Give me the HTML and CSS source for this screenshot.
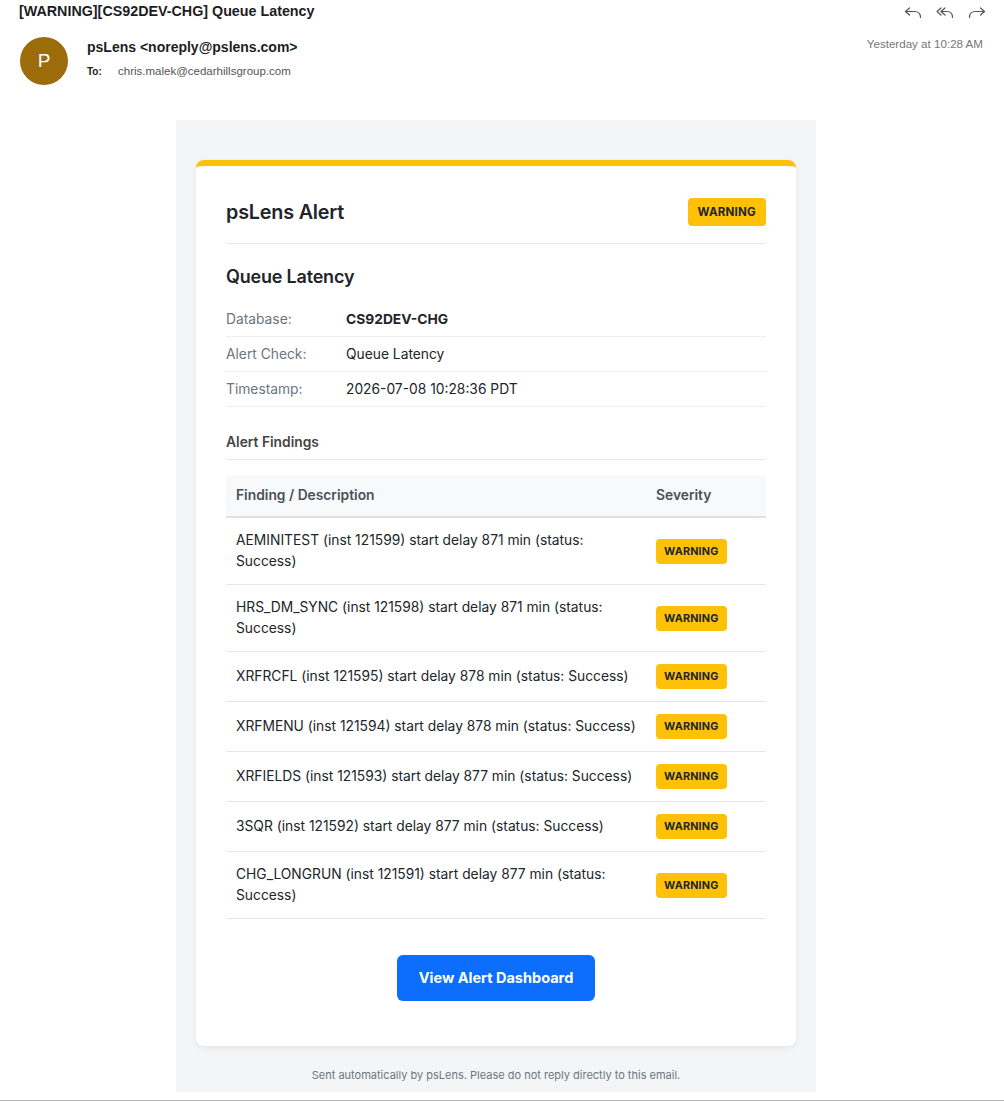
FILE: index.html
```html
<!DOCTYPE html>
<html lang="en">
<head>
    <meta charset="UTF-8">
    <meta name="viewport" content="width=device-width, initial-scale=1.0">
    <title>[WARNING][CS92DEV-CHG] Queue Latency</title>
    <link rel="stylesheet" href="styles.css">
</head>
<body>
<div class="mail-header">
    <div class="subject-row">
        <div class="subject">[WARNING][CS92DEV-CHG] Queue Latency</div>
        <div class="actions">
            <!-- reply -->
            <svg class="icon" viewBox="0 0 18 14" width="18" height="14">
                <path d="M5.5 3 L1.5 6.5 L5.5 10" />
                <path d="M1.5 6.5 H10.5 C14 6.5 16.5 8.5 16.5 12.5" />
            </svg>
            <!-- reply all -->
            <svg class="icon" viewBox="0 0 18 14" width="18" height="14">
                <path d="M5 3 L1 6.5 L5 10" />
                <path d="M9 3 L5 6.5 L9 10" />
                <path d="M5 6.5 H11 C14.5 6.5 16.5 8.5 16.5 12.5" />
            </svg>
            <!-- forward -->
            <svg class="icon" viewBox="0 0 18 14" width="18" height="14">
                <path d="M12.5 3 L16.5 6.5 L12.5 10" />
                <path d="M16.5 6.5 H7.5 C4 6.5 1.5 8.5 1.5 12.5" />
            </svg>
        </div>
    </div>
    <div class="sender-row">
        <div class="avatar">P</div>
        <div class="sender-info">
            <div class="from">psLens &lt;noreply@pslens.com&gt;</div>
            <div class="to"><span class="to-label">To:</span> chris.malek@cedarhillsgroup.com</div>
        </div>
        <div class="date">Yesterday at 10:28 AM</div>
    </div>
</div>

<div class="mail-body">
    <div class="card">
        <div class="card-header">
            <div class="card-title">psLens Alert</div>
            <span class="badge badge-lg">WARNING</span>
        </div>

        <h2 class="check-title">Queue Latency</h2>

        <table class="info">
            <tr>
                <td class="info-label">Database:</td>
                <td class="info-value strong">CS92DEV-CHG</td>
            </tr>
            <tr>
                <td class="info-label">Alert Check:</td>
                <td class="info-value">Queue Latency</td>
            </tr>
            <tr>
                <td class="info-label">Timestamp:</td>
                <td class="info-value">2026-07-08 10:28:36 PDT</td>
            </tr>
        </table>

        <h3 class="section-title">Alert Findings</h3>

        <table class="findings">
            <thead>
                <tr>
                    <th class="col-desc">Finding / Description</th>
                    <th class="col-sev">Severity</th>
                </tr>
            </thead>
            <tbody>
                <tr>
                    <td>AEMINITEST (inst 121599) start delay 871 min (status: Success)</td>
                    <td><span class="badge">WARNING</span></td>
                </tr>
                <tr>
                    <td>HRS_DM_SYNC (inst 121598) start delay 871 min (status: Success)</td>
                    <td><span class="badge">WARNING</span></td>
                </tr>
                <tr>
                    <td>XRFRCFL (inst 121595) start delay 878 min (status: Success)</td>
                    <td><span class="badge">WARNING</span></td>
                </tr>
                <tr>
                    <td>XRFMENU (inst 121594) start delay 878 min (status: Success)</td>
                    <td><span class="badge">WARNING</span></td>
                </tr>
                <tr>
                    <td>XRFIELDS (inst 121593) start delay 877 min (status: Success)</td>
                    <td><span class="badge">WARNING</span></td>
                </tr>
                <tr>
                    <td>3SQR (inst 121592) start delay 877 min (status: Success)</td>
                    <td><span class="badge">WARNING</span></td>
                </tr>
                <tr>
                    <td>CHG_LONGRUN (inst 121591) start delay 877 min (status: Success)</td>
                    <td><span class="badge">WARNING</span></td>
                </tr>
            </tbody>
        </table>

        <div class="cta">
            <a class="button" href="#">View Alert Dashboard</a>
        </div>
    </div>
    <div class="footer">Sent automatically by psLens. Please do not reply directly to this email.</div>
</div>
<div class="window-edge"></div>
</body>
</html>
```

FILE: styles.css
```css
body { margin: 0; font-family: "Liberation Sans", Arial, sans-serif; background: #fff; color: #222; }

/* --- mail client header --- */
.mail-header { padding: 3px 20px 0 20px; }
.subject-row { display: flex; justify-content: space-between; align-items: center; height: 16px; }
.subject { font-size: 14.3px; font-weight: bold; color: #1d1d1f; margin-left: -1px; }
.actions { display: flex; gap: 14px; margin-right: -2px; padding-top: 2px; }
.icon { fill: none; stroke: #555; stroke-width: 1.2; stroke-linecap: round; stroke-linejoin: round; }
.sender-row { display: flex; align-items: flex-start; margin-top: 18px; }
.avatar {
    width: 48px; height: 48px; border-radius: 50%; background: #9c6c0b; color: #fff;
    font-size: 19px; display: flex; align-items: center; justify-content: center; flex-shrink: 0;
}
.sender-info { margin-left: 19px; flex: 1; padding-top: 2px; }
.from { font-size: 14px; font-weight: bold; color: #1d1d1f; line-height: 16px; }
.to { font-size: 11.5px; color: #555; margin-top: 10px; }
.to-label { font-weight: bold; font-size: 10px; color: #222; margin-right: 13px; }
.date { font-size: 11.6px; color: #777; margin-right: 1px; }

/* --- email body --- */
.mail-body {
    width: 600px; margin: 35px 0 0 176px; padding: 40px 20px 0 20px; background: #f4f5f7;
    font-family: Inter, "Noto Sans", sans-serif; color: #212529;
}
.card {
    background: #fff; border-top: 6px solid #ffc107; border-radius: 8px; padding: 30px;
    box-shadow: 0 2px 6px rgba(0,0,0,0.07);
}
.card-header {
    display: flex; justify-content: space-between; align-items: center;
    padding-bottom: 15px; border-bottom: 1px solid #e5e7eb;
}
.card-title { font-size: 19.8px; font-weight: 600; line-height: 32px; letter-spacing: -0.2px; }
.badge {
    display: inline-block; background: #ffc107; color: #212529; font-size: 10.8px; font-weight: 700;
    line-height: 15px; padding: 5px 8px; border-radius: 4px; letter-spacing: 0.2px;
}
.badge-lg { font-size: 11.6px; padding: 7px 10px 6px 10px; }

.check-title { font-size: 18px; font-weight: 600; line-height: 26px; margin: 20px 0 12px 0; letter-spacing: -0.2px; }

.info { width: 100%; border-collapse: collapse; font-size: 13.8px; }
.info td { padding: 8px 0; line-height: 18px; border-bottom: 1px solid #eeeff1; }
.info-label { width: 120px; color: #6c757d; }
.info-value.strong { font-weight: 700; }

.section-title {
    font-size: 13.8px; font-weight: 600; color: #444; line-height: 20px;
    margin: 25px 0 15px 0; padding-bottom: 7px; border-bottom: 1px solid #e5e7eb;
}

.findings { width: 100%; border-collapse: collapse; font-size: 13.8px; }
.findings th {
    background: #f8f9fa; color: #495057; font-weight: 600; text-align: left;
    padding: 10px 10px 11px 10px; line-height: 20px; border-bottom: 2px solid #dee2e6;
}
.findings .col-sev { width: 100px; }
.findings td { padding: 12px 10px; line-height: 21px; border-bottom: 1px solid #e5e7eb; vertical-align: middle; }

.cta { text-align: center; margin: 36px 0 15px 0; }
.button {
    display: inline-block; background: #0d6efd; color: #fff; text-decoration: none; font-weight: 700;
    font-size: 14.5px; line-height: 20px; padding: 13px 22px; border-radius: 6px;
}

.footer { text-align: center; font-size: 11px; color: #6c757d; padding: 22px 0 10px 0; }

.window-edge { margin-top: 8px; height: 2px; background: #b5b5b5; }
```
